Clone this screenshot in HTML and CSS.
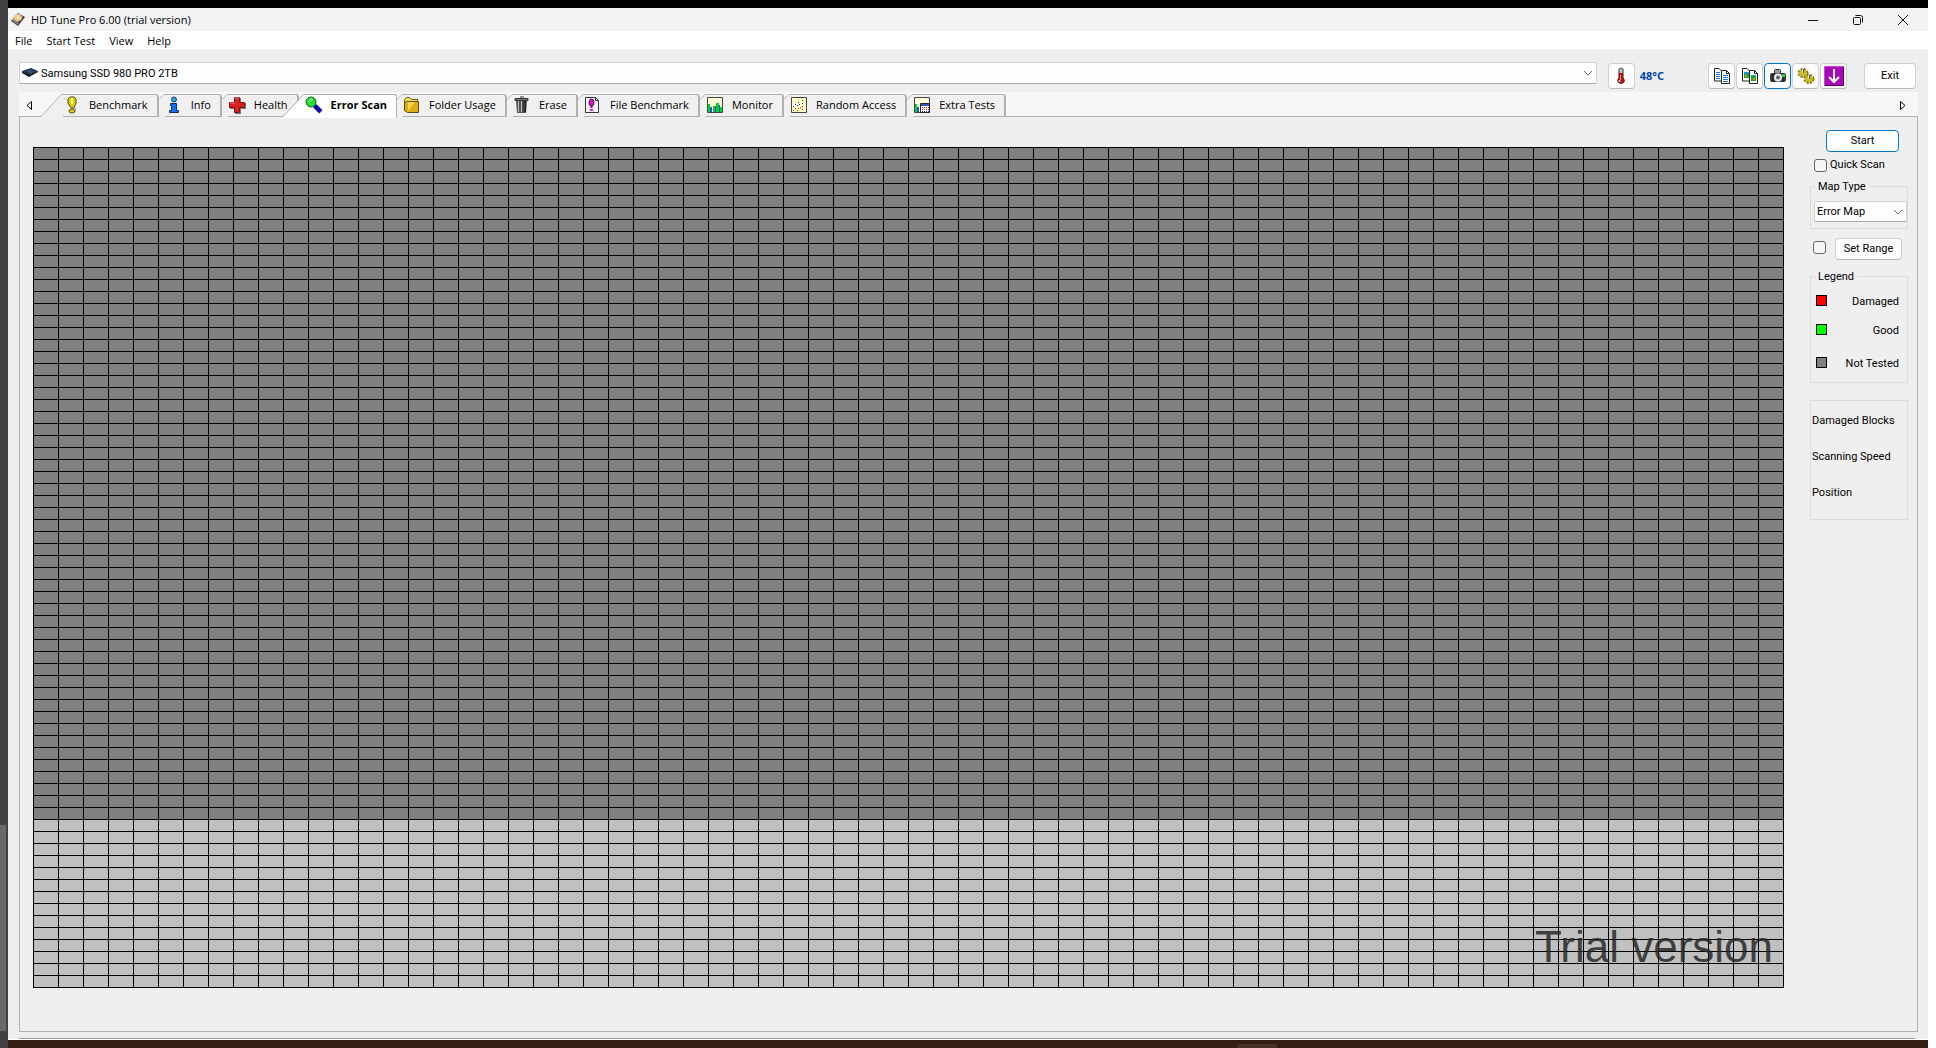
FILE: index.html
```html
<!DOCTYPE html>
<html lang="en">
<head>
<meta charset="utf-8">
<title>HD Tune Pro 6.00 (trial version)</title>
<link rel="stylesheet" href="styles.css">
</head>
<body>
<div class="desktop">
  <div class="edge"><div class="edge-thumb"></div></div>
  <div class="window">
    <header class="titlebar">
      <svg class="app-icon" width="14" height="13" viewBox="0 0 14 13"><path d="M0 8 7 0l7 4-7 9z" fill="#3c3838"/><path d="M1 7 7 1l5 3-6 6z" fill="#c8a078"/><ellipse cx="7" cy="4.500" rx="4" ry="3.500" fill="#f2c48c"/><circle cx="7" cy="4.500" r="1" fill="#fff"/><path d="M2 9l5 3 1-2-5-3z" fill="#777"/></svg>
      <h1 class="title">HD Tune Pro 6.00 (trial version)</h1>
      <div class="caption">
        <button class="caption-btn" aria-label="Minimize"><svg width="12" height="12" viewBox="0 0 12 12"><path d="M1 6.500h10" stroke="#111" fill="none"/></svg></button>
        <button class="caption-btn" aria-label="Restore"><svg width="12" height="12" viewBox="0 0 12 12"><path d="M1.500 4.500q0-1 1-1h5q1 0 1 1v5q0 1-1 1h-5q-1 0-1-1zM3.500 1.500h5q2 0 2 2v5" stroke="#111" fill="none"/></svg></button>
        <button class="caption-btn" aria-label="Close"><svg width="12" height="12" viewBox="0 0 12 12"><path d="M1 1l10 10M11 1 1 11" stroke="#111" fill="none"/></svg></button>
      </div>
    </header>
    <nav class="menubar">
      <button class="menu">File</button><button class="menu">Start Test</button><button class="menu">View</button><button class="menu">Help</button>
    </nav>
    <div class="toolbar">
      <div class="drive">
        <svg class="drive-icon" width="16" height="10" viewBox="0 0 16 10"><path d="M0 3 9 0l7 3-9 5z" fill="#1f3552"/><path d="M0 3l7 4 9-4v1L7 9 0 5z" fill="#101820"/><path d="M5 3l5 2M7 2l4 2" stroke="#3f6b9c"/></svg>
        <select class="drive-select" aria-label="Drive"><option>Samsung SSD 980 PRO 2TB</option></select>
        <svg class="chevron" width="10" height="6" viewBox="0 0 10 6"><path d="M1 1l4 4 4-4" stroke="#666" fill="none"/></svg>
      </div>
      <button class="tool" aria-label="Temperature"><svg width="18" height="18" viewBox="0 0 18 18"><path d="M7 2q2-2 4 0v9q2 2 1 4-3 3-6 0-1-2 1-4z" fill="#c81010" stroke="#501010"/><path d="M7.500 1.500h3V6h-3z" fill="#7fdce8"/><path d="M8.500 8v5" stroke="#ff9a9a"/><circle cx="7.500" cy="14" r="1" fill="#fff"/></svg></button>
      <output class="temp">48°C</output>
      <div class="tools">
        <button class="tool" aria-label="Copy text"><svg width="18" height="18" viewBox="0 0 18 18"><path d="M1.500 1.500H6L8.500 4v10h-7z" fill="#fff" stroke="#222"/><path d="M8.500 3.500h5l3 3v10h-8z" fill="#fff" stroke="#222"/><path d="M13.500 3.500v3h3" fill="none" stroke="#222"/><path d="M3 5.500h4M3 7.500h4M3 9.500h4M3 11.500h4M10 8.500h5M10 10.500h5M10 12.500h5M10 14.500h5" stroke="#1276e0"/></svg></button>
        <button class="tool" aria-label="Copy image"><svg width="18" height="18" viewBox="0 0 18 18"><path d="M1.500 1.500H6L8.500 4v10h-7z" fill="#fff" stroke="#222"/><path d="M8.500 3.500h5l3 3v10h-8z" fill="#fff" stroke="#222"/><path d="M13.500 3.500v3h3" fill="none" stroke="#222"/><path d="M3 5h5v6H3zM10 8h5v6h-5z" fill="#0fae30"/><path d="M3 5h5v2H3zM10 8h5v1h-5z" fill="#218ee0"/><path d="M4 8h2v2H4zM12 11h2v2h-2z" fill="#e08a20"/></svg></button>
        <button class="tool focus" aria-label="Save screenshot"><svg width="18" height="18" viewBox="0 0 18 18"><path d="M5.500 6V3.500q0-1 1-1h4q1 0 1 1V6" fill="none" stroke="#333"/><path d="M6 3h5v3H6z" fill="#999"/><rect x="1" y="6" width="16" height="9" rx="2" fill="#3a3c3e"/><path d="M4 6v9M14 6v9" stroke="#1b1b1b"/><circle cx="9" cy="10.500" r="3" fill="#5b6065" stroke="#eee" stroke-width="2"/><path d="M13 7h3v3h-3z" fill="#20d040"/></svg></button>
        <button class="tool" aria-label="Options"><svg width="18" height="18" viewBox="0 0 18 18"><ellipse cx="6" cy="6" rx="4" ry="3.500" fill="#c8bc20" stroke="#857b16" stroke-width="3" stroke-dasharray="2 1"/><ellipse cx="12" cy="12" rx="4" ry="3.500" fill="#c8bc20" stroke="#857b16" stroke-width="3" stroke-dasharray="2 1"/><ellipse cx="6" cy="6" rx="4" ry="3" fill="#cdc022"/><ellipse cx="12" cy="12" rx="4" ry="3" fill="#cdc022"/><path d="M6.500 2v4M12.500 8v4" stroke="#555"/><path d="M5.500 2v4M11.500 8v4" stroke="#ddd"/></svg></button>
        <button class="tool" aria-label="Minimize to tray"><svg width="20" height="20" viewBox="0 0 20 20"><path d="M0 0h20v20H0z" fill="#a808b8"/><path d="M0 0h20v1H1v19H0z" fill="#c848d8"/><path d="M19.500 1v18.500H1" fill="none" stroke="#5a0068"/><path d="M10 3v13M5 11l5 5 5-5" stroke="#fff" stroke-width="2" fill="none"/></svg></button>
      </div>
      <button class="btn exit">Exit</button>
    </div>
    <main class="content">
      <div class="tabstrip">
        <button class="scroll" aria-label="Scroll tabs left"><svg width="6" height="9" viewBox="0 0 6 9"><path d="M5.500 .500v8L1 4.500z" fill="none" stroke="#000"/></svg></button>
        <div class="tabs" role="tablist">
          <button class="tab" role="tab"><svg class="slant" width="22" height="23" viewBox="0 0 22 23"><path d="M0 23 21 1h1v22z" fill="#f0f0f0"/><path d="M0 22.500 20.500 .500H22" fill="none" stroke="#b0b0b0"/></svg><span class="face"><svg class="icon" width="18" height="18" viewBox="0 0 18 18"><path d="M7 1h4l2 2v4l-2 5H8L5 7V3z" fill="#d8d010" stroke="#55500a"/><path d="M8 2h2v6H8z" fill="#ffff70"/><ellipse cx="9" cy="15" rx="3" ry="2" fill="#d8d010" stroke="#55500a"/><path d="M12.500 12v4" stroke="#d28ae0"/></svg>Benchmark</span></button>
          <button class="tab" role="tab"><svg class="slant" width="6" height="23" viewBox="0 0 6 23"><path d="M0 6 5 1h1v22H0z" fill="#f0f0f0"/><path d="M0 5.500 5 .500h1" fill="none" stroke="#b0b0b0"/></svg><span class="face"><svg class="icon" width="18" height="18" viewBox="0 0 18 18"><circle cx="9" cy="3.500" r="2.500" fill="#20a8f0" stroke="#204060"/><path d="M5.500 7.500h6v7h2v2h-9v-2h2v-5h-1z" fill="#1070f0" stroke="#10305c"/></svg>Info</span></button>
          <button class="tab" role="tab"><svg class="slant" width="6" height="23" viewBox="0 0 6 23"><path d="M0 6 5 1h1v22H0z" fill="#f0f0f0"/><path d="M0 5.500 5 .500h1" fill="none" stroke="#b0b0b0"/></svg><span class="face"><svg class="icon" width="18" height="18" viewBox="0 0 18 18"><path d="M7 2h6v5h5v6h-5v5H7v-5H2V7h5z" fill="#777"/><path d="M6.500 1.500h5v5h5v5h-5v5h-5v-5h-5v-5h5z" fill="#dc2020" stroke="#801414"/><path d="M7 2h4M2 7h5" stroke="#ff7070"/></svg>Health</span></button>
          <button class="tab active" role="tab" aria-selected="true"><svg class="slant" width="22" height="24" viewBox="0 0 22 24"><path d="M0 24V23L21 1h1v23z" fill="#fff"/><path d="M0 22.500 20.500 .500H22" fill="none" stroke="#b0b0b0"/></svg><span class="face"><svg class="icon" width="18" height="18" viewBox="0 0 18 18"><path d="M10 10l6 6" stroke="#667" stroke-width="5"/><path d="M9.500 9.500l6 6" stroke="#0808b8" stroke-width="4"/><circle cx="6" cy="6" r="5" fill="#20e030" stroke="#17641f"/><path d="M3 6l4-4M4 7l4-4" stroke="#a6ffaa"/></svg>Error Scan</span></button>
          <button class="tab" role="tab"><svg class="slant" width="6" height="23" viewBox="0 0 6 23"><path d="M0 6 5 1h1v22H0z" fill="#f0f0f0"/><path d="M0 5.500 5 .500h1" fill="none" stroke="#b0b0b0"/></svg><span class="face"><svg class="icon" width="18" height="18" viewBox="0 0 18 18"><path d="M1.500 3.500l2-2h3l2 2h6v11h-13z" fill="#f0e050" stroke="#6a5810"/><path d="M4.500 5.500h11v11h-11l-3-2v-8z" fill="#dcae18" stroke="#5e4a0c"/><path d="M5 6h7L5 15z" fill="#f4d648"/></svg>Folder Usage</span></button>
          <button class="tab" role="tab"><svg class="slant" width="6" height="23" viewBox="0 0 6 23"><path d="M0 6 5 1h1v22H0z" fill="#f0f0f0"/><path d="M0 5.500 5 .500h1" fill="none" stroke="#b0b0b0"/></svg><span class="face"><svg class="icon" width="18" height="18" viewBox="0 0 18 18"><path d="M3 5h11l-1 12H4z" fill="#555"/><path d="M5.500 5v11M8.500 5v11" stroke="#bbb"/><path d="M11 5v11M12.500 5v11" stroke="#222"/><path d="M2 2.500h13v2H2zM7 1h4" fill="#777" stroke="#333"/></svg>Erase</span></button>
          <button class="tab" role="tab"><svg class="slant" width="6" height="23" viewBox="0 0 6 23"><path d="M0 6 5 1h1v22H0z" fill="#f0f0f0"/><path d="M0 5.500 5 .500h1" fill="none" stroke="#b0b0b0"/></svg><span class="face"><svg class="icon" width="18" height="18" viewBox="0 0 18 18"><path d="M1.500 1.500h10l3 3v12h-13z" fill="#f6f6f6" stroke="#333"/><path d="M11.500 1.500v3h3" fill="none" stroke="#333"/><ellipse cx="7.500" cy="6.500" rx="2.500" ry="3.500" fill="#d810d8" stroke="#560056"/><path d="M7.500 9v3" stroke="#8c008c" stroke-width="2"/><ellipse cx="7.500" cy="14" rx="2" ry="1" fill="#d810d8"/></svg>File Benchmark</span></button>
          <button class="tab" role="tab"><svg class="slant" width="6" height="23" viewBox="0 0 6 23"><path d="M0 6 5 1h1v22H0z" fill="#f0f0f0"/><path d="M0 5.500 5 .500h1" fill="none" stroke="#b0b0b0"/></svg><span class="face"><svg class="icon" width="18" height="18" viewBox="0 0 18 18"><path d="M1.500 1.500h15v15h-15z" fill="#ffffd8" stroke="#444"/><path d="M2 8h2v8H2zM7 10h2v6H7zM10 7h3v9h-3zM14 11h2v5h-2z" fill="#00d820"/><path d="M4 11h2v5H4zM9 10h1v6H9zM13 9h1v7h-1z" fill="#4040e8"/></svg>Monitor</span></button>
          <button class="tab" role="tab"><svg class="slant" width="6" height="23" viewBox="0 0 6 23"><path d="M0 6 5 1h1v22H0z" fill="#f0f0f0"/><path d="M0 5.500 5 .500h1" fill="none" stroke="#b0b0b0"/></svg><span class="face"><svg class="icon" width="18" height="18" viewBox="0 0 18 18"><path d="M1.500 1.500h15v15h-15z" fill="#ffffc8" stroke="#444"/><path d="M3 10h1v1H3zM5 8h1v1H5zM7 9h1v1H7zM8 6h1v1H8zM12 4h1v1h-1zM12 7h1v1h-1zM9 8h1v1H9z" fill="#2020e0"/><path d="M3 14h1v1H3zM5 12h1v1H5zM8 12h1v1H8zM7 14h1v1H7zM10 11h1v1h-1zM12 10h1v1h-1zM12 13h1v1h-1z" fill="#e02020"/></svg>Random Access</span></button>
          <button class="tab" role="tab"><svg class="slant" width="6" height="23" viewBox="0 0 6 23"><path d="M0 6 5 1h1v22H0z" fill="#f0f0f0"/><path d="M0 5.500 5 .500h1" fill="none" stroke="#b0b0b0"/></svg><span class="face"><svg class="icon" width="18" height="18" viewBox="0 0 18 18"><path d="M1.500 1.500h15v15h-15z" fill="#ffffd8" stroke="#444"/><path d="M2 8h2v8H2z" fill="#00d820"/><path d="M4 11h2v5H4z" fill="#4040e8"/><path d="M7.500 7.500h9v9h-9z" fill="#fff" stroke="#223"/><path d="M8 8h8v2H8z" fill="#3050c8"/><path d="M9 11.500h7M9 13.500h7" stroke="#d83030" stroke-dasharray="1 1"/><path d="M9 15.500h7" stroke="#3030d8" stroke-dasharray="1 1"/></svg>Extra Tests</span></button>
        </div>
        <button class="scroll" aria-label="Scroll tabs right"><svg width="6" height="9" viewBox="0 0 6 9"><path d="M.500 .500v8L5 4.500z" fill="none" stroke="#000"/></svg></button>
      </div>
      <section class="panel">
        <div class="map"><span class="watermark">Trial version</span></div>
        <aside class="side">
          <button class="btn start">Start</button>
          <label class="quick"><input type="checkbox" class="check">Quick Scan</label>
          <fieldset class="group map-type">
            <legend><label for="map-type">Map Type</label></legend>
            <div class="combo"><select id="map-type" class="map-select"><option>Error Map</option></select><svg class="chevron" width="10" height="6" viewBox="0 0 10 6"><path d="M1 1l4 4 4-4" stroke="#666" fill="none"/></svg></div>
          </fieldset>
          <div class="range"><input type="checkbox" class="check" aria-label="Use range"><button class="btn set-range">Set Range</button></div>
          <fieldset class="group">
            <legend>Legend</legend>
            <ul class="keys">
              <li class="key"><i class="swatch damaged"></i>Damaged</li>
              <li class="key"><i class="swatch good"></i>Good</li>
              <li class="key"><i class="swatch untested"></i>Not Tested</li>
            </ul>
          </fieldset>
          <div class="status"><p>Damaged Blocks</p><p>Scanning Speed</p><p>Position</p></div>
        </aside>
      </section>
    </main>
    <footer class="statusline"></footer>
    <div class="taskbar"><div class="taskbar-item"></div></div>
  </div>
</div>
</body>
</html>
```
FILE: styles.css
```css
* { box-sizing: border-box; }
body { margin: 0; background: #fff; color: #000; font: 11px/14px Roboto, sans-serif; }
button, select, input { font: inherit; color: inherit; margin: 0; padding: 0; }
button { border: 0; background: none; }
svg { display: block; flex: none; }

.desktop { display: grid; grid-template-columns: 8px 1fr; min-height: 100vh; padding-right: 8px; }
.edge { background: #424242; display: flex; flex-direction: column; justify-content: flex-end; padding: 0 2px 17px 0; }
.edge-thumb { height: 20%; background: #696969; }
.window { display: flex; flex-direction: column; min-width: 0; background: #edeef0; border-top: 8px solid #000; }

.titlebar { display: flex; align-items: center; height: 23px; padding: 0 3px; background: #f1f3f5; }
.title { margin: 0 auto 0 6px; font: 11px/16px "Open Sans", sans-serif; }
.caption { display: flex; }
.caption-btn { display: grid; place-items: center; width: 45px; height: 22px; }
.menubar { display: flex; gap: 14px; height: 18px; padding: 2px 0 0 7px; background: #fff; font: 11px/16px "Open Sans", sans-serif; }

.toolbar { display: flex; align-items: flex-start; height: 43px; padding: 13px 12px 0 11px; }
.drive { position: relative; flex: 1; height: 22px; }
.drive-icon { position: absolute; left: 3px; top: 6px; }
.drive-select { width: 100%; height: 22px; padding: 2px 0 0 21px; }
.drive-select, .map-select { appearance: none; background: #fdfdfd; border: 1px solid #d0d0d0; border-bottom-color: #aaa; border-radius: 2px; }
.chevron { position: absolute; right: 4px; top: 8px; }
.tool, .btn { display: grid; place-items: center; background: #fdfdfd; border: 1px solid #cfcfcf; border-bottom-color: #b8b8b8; border-radius: 4px; }
.tool { width: 27px; height: 26px; }
.drive + .tool { margin-left: 11px; }
.toolbar > .tool, .tools, .exit { margin-top: 1px; }
.temp { margin: 7px 0 0 5px; color: #0046b0; font-family: "Noto Sans", sans-serif; font-weight: bold; }
.tools { display: flex; gap: 1px; margin-left: 44px; }
.focus, .btn.start { border-color: #0078d4; }
.exit { width: 52px; height: 26px; margin-left: 17px; }

.content { flex: 1; display: flex; flex-direction: column; margin: 0 10px 0 11px; }
.tabstrip { display: flex; height: 24px; padding: 2px 10px 0 5px; background: #f7f7f7; font-family: "Open Sans", sans-serif; }
.scroll { width: 10px; display: grid; place-items: center; }
.tabs { display: flex; flex: 1; margin-left: 7px; }
.tab { position: relative; display: flex; height: 22px; white-space: nowrap; }
.face { display: flex; align-items: center; gap: 8px; height: 22px; padding: 0 9px 2px 0; background: #f0f0f0; border-top: 1px solid #b0b0b0; border-right: 2px solid #b0b0b0; border-top-right-radius: 3px; }
.tab.active { z-index: 1; height: 24px; margin-left: -16px; font-weight: bold; }
.active .face { height: 24px; padding-bottom: 4px; background: #fff; border-right-width: 1px; }
.panel { flex: 1; display: flex; gap: 26px; padding: 30px 9px 43px 13px; background: #efefef; border: 1px solid #b0b0b0; }

.map { position: relative; flex: 1; border: solid #000; border-width: 0 1px 1px 0; background:
  linear-gradient(#000 0 1px, transparent 1px) 0 0 / 100% calc(100% / 70),
  linear-gradient(90deg, #000 0 1px, transparent 1px) 0 0 / calc(100% / 70) 100%,
  linear-gradient(#808080 80%, #c0c0c0 80%); }
.watermark { position: absolute; right: 10px; bottom: 15px; font: 44px/50px "Liberation Sans", sans-serif; color: rgba(40, 40, 40, .85); }

.side { width: 98px; display: flex; flex-direction: column; margin-top: -17px; }
.start { width: 73px; height: 22px; margin-left: 16px; }
.quick { display: flex; align-items: center; gap: 3px; height: 14px; margin: 6px 0 0 4px; white-space: nowrap; }
.check { appearance: none; width: 13px; height: 13px; background: #f6f6f6; border: 1px solid #666; border-radius: 3px; }
.group { min-width: 0; margin: 0; padding: 0; border: 1px solid #dcdcdc; }
.group legend { margin-left: 4px; padding: 2px 3px 0; }
.map-type { height: 51px; margin-top: 6px; }
.combo { position: relative; margin: 7px 0 0 3px; }
.map-select { width: 100%; height: 21px; padding-left: 2px; }
.range { display: flex; gap: 9px; margin: 9px 0 8px 3px; }
.range .check { margin-top: 3px; }
.set-range { width: 67px; height: 22px; }
.keys { display: flex; flex-direction: column; gap: 15px; margin: 0; padding: 11px 8px 11px 5px; list-style: none; }
.key { display: flex; justify-content: space-between; height: 14px; }
.key:last-child { margin-top: 4px; }
.swatch { width: 11px; height: 11px; border: 1px solid #000; }
.damaged { background: #f00; }
.good { background: #0f0; }
.untested { background: #808080; }
.status { display: flex; flex-direction: column; gap: 22px; height: 120px; margin-top: 17px; padding: 13px 1px; border: 1px solid #dcdcdc; white-space: nowrap; }
.status p { margin: 0; }
.statusline { height: 7px; margin: 0 13px 0 11px; border-bottom: 1px solid #999; }
.taskbar { height: 9px; padding: 4px 0 0 64%; background: #351f14; border-top: 1px solid #fff; }
.taskbar-item { width: 40px; height: 4px; background: #4a3126; border-radius: 3px 3px 0 0; }
```
